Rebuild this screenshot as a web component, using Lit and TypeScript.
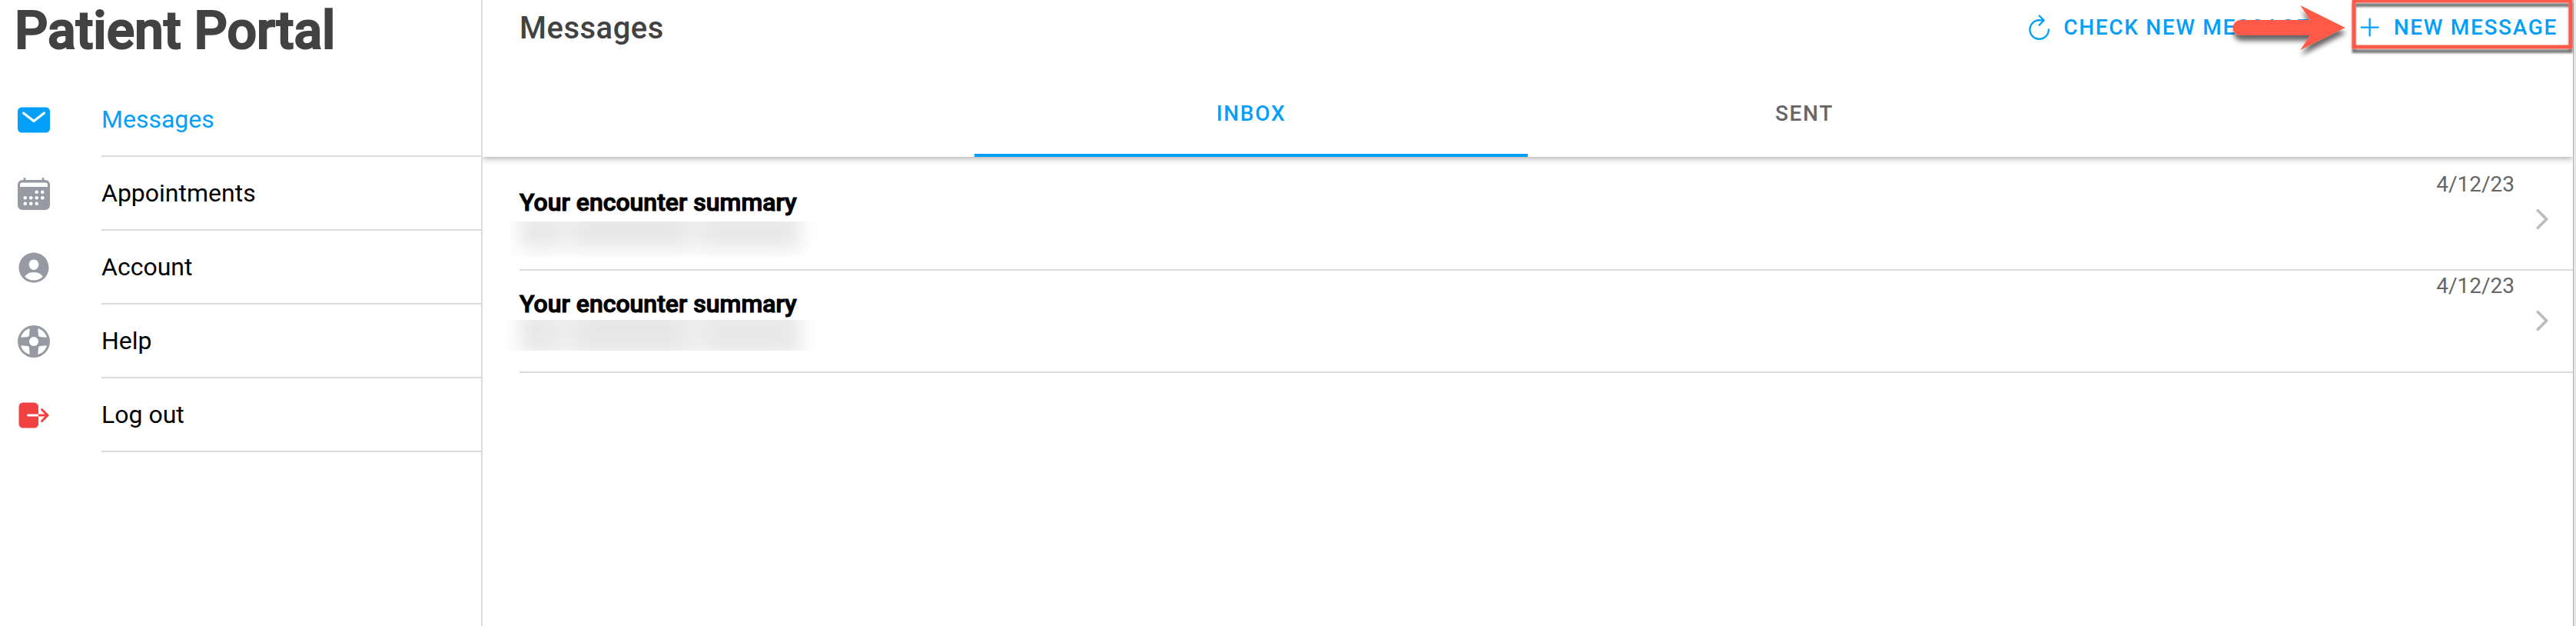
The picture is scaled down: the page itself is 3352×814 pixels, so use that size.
import { LitElement, html, css, svg } from "lit";
import { customElement, property, state } from "lit/decorators.js";

const icons: Record<string, unknown> = {
  mail: svg`<path fill="currentColor" d="M424 80H88a56.06 56.06 0 00-56 56v240a56.06 56.06 0 0056 56h336a56.06 56.06 0 0056-56V136a56.06 56.06 0 00-56-56zm-14.18 92.63l-144 112a16 16 0 01-19.64 0l-144-112a16 16 0 1119.64-25.26L256 251.73l134.18-104.36a16 16 0 0119.64 25.26z"/>`,
  calendar: svg`<path fill="currentColor" fill-rule="evenodd" d="M96 64h16V48a16 16 0 0132 0v16h224V48a16 16 0 0132 0v16h16a64 64 0 0164 64v288a64 64 0 01-64 64H96a64 64 0 01-64-64V128a64 64 0 0164-64zM96 100a32 32 0 00-32 32v28h384v-28a32 32 0 00-32-32z"/>
    ${[[296, 232], [376, 232], [136, 312], [216, 312], [296, 312], [376, 312], [136, 392], [216, 392], [296, 392]].map(
      ([x, y]) => svg`<circle cx=${x} cy=${y} r="24" fill="#fff"/>`
    )}`,
  person: svg`<path fill="currentColor" d="M256 48C141.31 48 48 141.31 48 256s93.31 208 208 208 208-93.31 208-208S370.69 48 256 48zm-50.22 116.82C218.45 151.39 236.28 144 256 144s37.39 7.44 50.11 20.94c12.89 13.68 19.16 32.06 17.68 51.82C320.83 256 290.43 288 256 288s-64.89-32-67.79-71.25c-1.47-19.92 4.79-38.36 17.57-51.93zM256 432a175.49 175.49 0 01-126-53.22 122.91 122.91 0 0135.14-33.44C190.63 329 222.89 320 256 320s65.37 9 90.83 25.34A122.87 122.87 0 01382 378.78 175.45 175.45 0 01256 432z"/>`,
  buoy: svg`<circle cx="256" cy="256" r="224" fill="currentColor"/><circle cx="256" cy="256" r="64" fill="#fff"/>
    ${[0, 90, 180, 270].map(
      (a) => svg`<path fill="#fff" transform="rotate(${a} 256 256)" d="M313 82Q314 74 322 77A192 192 0 01435 190Q438 198 430 199L340 192Q328 190 320 172Z"/>`
    )}`,
  logout: svg`<path fill="currentColor" d="M160 256a16 16 0 0116-16h144V136c0-32-33.79-56-64-56H104a56.06 56.06 0 00-56 56v240a56.06 56.06 0 0056 56h160a56.06 56.06 0 0056-56V272H176a16 16 0 01-16-16zM459.31 244.69l-80-80a16 16 0 00-22.62 22.62L409.37 240H320v32h89.37l-52.68 52.69a16 16 0 1022.62 22.62l80-80a16 16 0 000-22.62z"/>`,
  refresh: svg`<g fill="none" stroke="currentColor" stroke-width="30" stroke-linecap="round" stroke-linejoin="round"><path d="M320 146s24.36-12-64-12a160 160 0 10160 160"/><path d="M256 58l80 80-80 80"/></g>`,
  add: svg`<path fill="none" stroke="currentColor" stroke-width="30" stroke-linecap="round" d="M256 112v288M400 256H112"/>`,
  chevron: svg`<path fill="none" stroke="currentColor" stroke-width="48" stroke-linecap="round" stroke-linejoin="round" d="M184 112l144 144-144 144"/>`,
};

@customElement("portal-icon")
class PortalIcon extends LitElement {
  @property() name = "";
  static styles = css`
    :host { display: block; flex: none; }
    svg { display: block; width: 100%; height: 100%; }
  `;
  render() {
    return html`<svg viewBox="0 0 512 512">${icons[this.name]}</svg>`;
  }
}

@customElement("app-root")
class AppRoot extends LitElement {
  @state() tab = "Inbox";

  static styles = css`
    :host {
      display: flex; position: relative; overflow: hidden; box-sizing: border-box;
      width: 100vw; height: 814px; background: #fff; color: #000;
      font-family: Roboto, sans-serif;
    }
    * { box-sizing: border-box; }
    .side { width: 628px; flex: none; border-right: 2px solid #dcdcdc; }
    .brand {
      margin: 0; height: 108px; padding-left: 19px; font-size: 68px; line-height: 80px;
      font-weight: 500; -webkit-text-stroke: 2.2px #424242; color: #424242; white-space: nowrap;
    }
    .item { display: flex; align-items: center; height: 96px; padding-left: 20px; color: #979aa2; }
    .item portal-icon { width: 48px; height: 48px; margin-right: 64px; }
    .item .label {
      flex: 1; height: 96px; line-height: 95px; border-bottom: 2px solid #dcdcdc;
      color: #000; font-size: 32px;
    }
    .item.active, .item.active .label { color: #039ff9; }
    .item.danger { color: #f24141; }
    .main { flex: 1; min-width: 0; display: flex; flex-direction: column; }
    .head { height: 204px; flex: none; box-shadow: 0 2px 8px rgba(0,0,0,.34); clip-path: inset(0 0 -10px 0); }
    .bar { display: flex; align-items: center; height: 92px; padding: 0 20px 20px 48px; }
    h1 {
      margin: 2px 0 0; flex: 1; color: #424242; font-size: 40px; line-height: 48px;
      font-weight: 500; letter-spacing: .5px;
    }
    .btn {
      display: flex; align-items: center; height: 56px; color: #039ff9; font-size: 28px;
      line-height: 56px; font-weight: 500; letter-spacing: 1.68px; text-transform: uppercase;
      white-space: nowrap;
    }
    .btn portal-icon { width: 39.2px; height: 39.2px; margin-right: 12px; }
    .btn + .btn { margin-left: 58px; }
    .tabs { display: flex; justify-content: center; height: 112px; }
    .tab {
      width: 720px; height: 112px; line-height: 111px; text-align: center; font-size: 28px;
      font-weight: 500; letter-spacing: 1.68px; text-transform: uppercase; color: #666;
      border-bottom: 4px solid transparent;
    }
    .tab.active { color: #039ff9; border-bottom-color: #039ff9; }
    .list { padding: 16px 0 0 48px; }
    .msg { display: flex; height: 132px; border-bottom: 2px solid #dcdcdc; }
    .msg + .msg { height: 133px; }
    .body { flex: 1; padding-top: 22px; }
    .subject { font-size: 32px; line-height: 42px; font-weight: 500; -webkit-text-stroke: 1.1px #000; }
    .redacted { width: 402px; height: 46px; margin: 4px 0 0 -12px; overflow: hidden; }
    .msg + .msg .redacted { height: 40px; margin: 0 0 0 -16px; }
    .smudge { display: flex; width: 366px; height: 52px; margin: -16px 0 0 12px; filter: blur(12px); }
    .msg + .msg .smudge { height: 62px; margin-left: 16px; }
    .smudge i { background: #e8e8e8; flex: 3; }
    .smudge i:nth-child(2) { flex: 2; background: #eee; }
    .smudge i:nth-child(3) { flex: 9; background: #e7e7e7; }
    .smudge i:nth-child(4) { flex: 2; background: #eee; }
    .smudge i:nth-child(5) { flex: 8; }
    .date { font-size: 28px; line-height: 40px; color: #666; }
    .go { width: 40px; height: 40px; margin: 45px 20px 0 16px; color: #bcbcbc; }
    .edge { width: 4px; flex: none; background: #e6e6e6; border-left: 1px solid #b2b2b2; }
    .note { position: absolute; right: 0; top: 0; width: 472px; height: 90px; overflow: visible; }
  `;

  render() {
    const nav = [
      ["mail", "Messages", "active"],
      ["calendar", "Appointments", ""],
      ["person", "Account", ""],
      ["buoy", "Help", ""],
      ["logout", "Log out", "danger"],
    ];
    const messages = [1, 2].map(() => ({ subject: "Your encounter summary", date: "4/12/23" }));
    return html`
      <nav class="side">
        <h2 class="brand">Patient Portal</h2>
        ${nav.map(([icon, label, cls]) => html`
          <div class="item ${cls}"><portal-icon name=${icon}></portal-icon><span class="label">${label}</span></div>`)}
      </nav>
      <main class="main">
        <header class="head">
          <div class="bar">
            <h1>Messages</h1>
            <div class="btn"><portal-icon name="refresh"></portal-icon>Check new message</div>
            <div class="btn"><portal-icon name="add"></portal-icon>New message</div>
          </div>
          <div class="tabs">
            ${["Inbox", "Sent"].map((t) => html`
              <div class="tab ${t === this.tab ? "active" : ""}" @click=${() => (this.tab = t)}>${t}</div>`)}
          </div>
        </header>
        <section class="list">
          ${messages.map((m) => html`
            <div class="msg">
              <div class="body">
                <div class="subject">${m.subject}</div>
                <div class="redacted"><div class="smudge"><i></i><i></i><i></i><i></i><i></i></div></div>
              </div>
              <div class="date">${m.date}</div>
              <portal-icon class="go" name="chevron"></portal-icon>
            </div>`)}
        </section>
      </main>
      <div class="edge"></div>
      <svg class="note" viewBox="2880 0 472 90">
        <defs>
          <filter id="soft" x="-10%" y="-20%" width="120%" height="160%">
            <feDropShadow dx="1" dy="7" stdDeviation="3.2" flood-color="#000" flood-opacity=".6"/>
          </filter>
          <filter id="hard" x="-5%" y="-20%" width="110%" height="150%">
            <feDropShadow dx="0" dy="5.5" stdDeviation="1.2" flood-color="#000" flood-opacity=".52"/>
          </filter>
        </defs>
        <path filter="url(#soft)" fill="#ff5a4a" d="M2915.5 26H3006L2993.3 7L3051.7 36L2993.3 65L3006 46H2915.5A10 10 0 012915.5 26Z"/>
        <rect filter="url(#hard)" fill="none" stroke="#ff5a4a" stroke-width="5" x="3063" y="1" width="282" height="60"/>
      </svg>
    `;
  }
}
